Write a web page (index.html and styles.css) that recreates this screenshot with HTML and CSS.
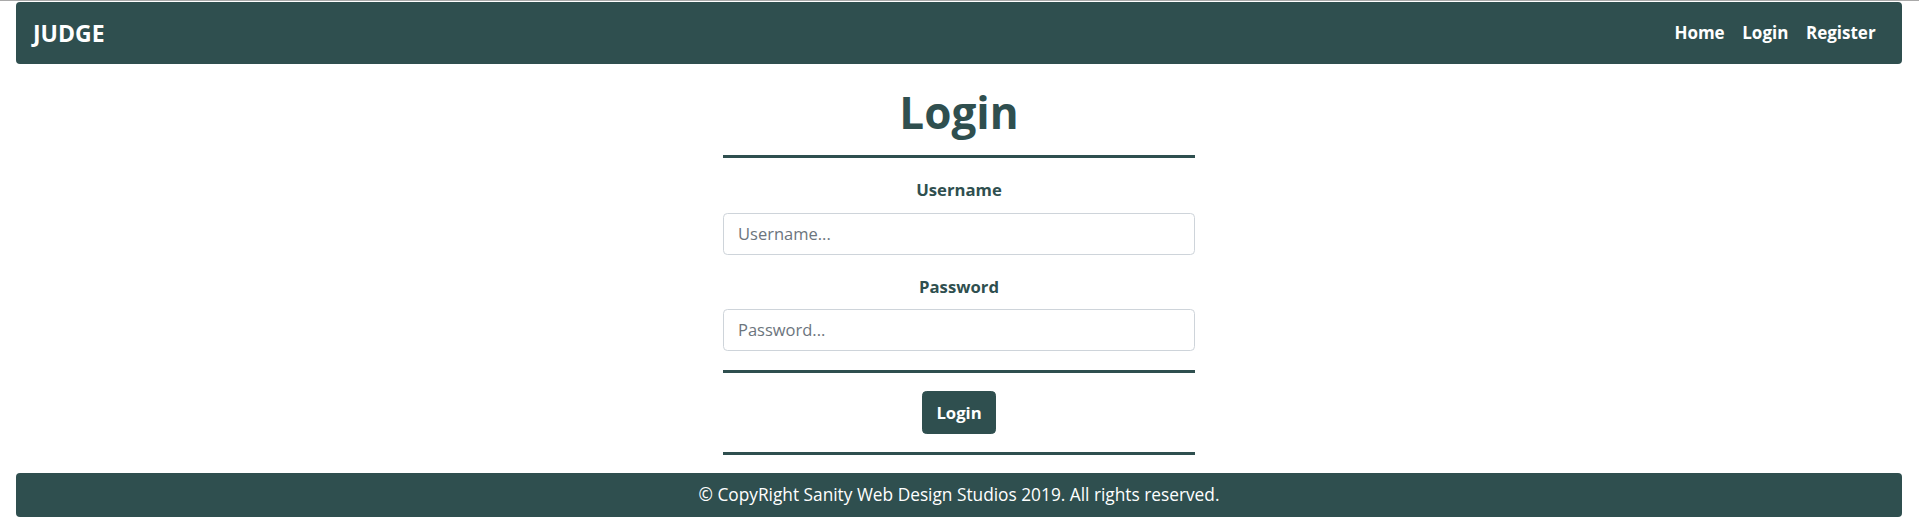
FILE: index.html
```html
<!DOCTYPE html>
<html lang="en">
<head>
<meta charset="utf-8">
<title>JUDGE - Login</title>
<link rel="stylesheet" href="styles.css">
</head>
<body>
<div class="page">
  <nav class="navbar">
    <a class="brand" href="#">JUDGE</a>
    <ul class="nav">
      <li><a href="#">Home</a></li>
      <li><a href="#">Login</a></li>
      <li><a href="#">Register</a></li>
    </ul>
  </nav>
  <main class="main">
    <form class="login">
      <h1 class="title">Login</h1>
      <hr class="rule rule-first">
      <label class="field-label" for="username">Username</label>
      <input class="field" id="username" type="text" placeholder="Username...">
      <label class="field-label" for="password">Password</label>
      <input class="field" id="password" type="password" placeholder="Password...">
      <hr class="rule rule-mid">
      <button class="btn" type="button">Login</button>
      <hr class="rule rule-last">
    </form>
  </main>
  <footer class="footer">© CopyRight Sanity Web Design Studios 2019. All rights reserved.</footer>
</div>
</body>
</html>
```

FILE: styles.css
```css
html, body {
  margin: 0;
  padding: 0;
  background: #ffffff;
}
body {
  border-top: 1px solid #a9a9a9;
  font-family: "Open Sans", "Noto Sans", sans-serif;
  font-size: 17.6px;
  line-height: 1.5;
  color: #2f4f4f;
}
.page {
  padding: 1px 17px 0 16px;
  display: flex;
  flex-direction: column;
}
.navbar {
  height: 62px;
  background: #2f4f4f;
  border-radius: 4px;
  display: flex;
  align-items: center;
  justify-content: space-between;
  padding: 0 17.6px 0 17px;
  box-sizing: border-box;
}
.brand {
  color: #ffffff;
  font-weight: 700;
  font-size: 23px;
  text-decoration: none;
}
.nav {
  list-style: none;
  margin: 0;
  padding: 0;
  display: flex;
}
.nav a {
  display: block;
  padding: 8px 8.8px;
  color: #ffffff;
  font-weight: 700;
  text-decoration: none;
  font-size: 17px;
}
.main {
  display: flex;
  justify-content: center;
}
.login {
  width: 472px;
  display: flex;
  flex-direction: column;
  align-items: stretch;
}
.title {
  margin: 22px 0 0;
  text-align: center;
  font-size: 44px;
  line-height: 52.8px;
  font-weight: 700;
  color: #2f4f4f;
}
.rule {
  margin: 0;
  border: 0;
  height: 3px;
  background: #2f4f4f;
}
.rule-first { margin-top: 16px; }
.rule-mid { margin-top: 19px; }
.rule-last { margin-top: 18px; }
.field-label {
  display: block;
  margin-top: 19px;
  text-align: center;
  font-weight: 700;
  font-size: 16.7px;
  line-height: 26px;
  color: #2f4f4f;
}
.field {
  margin-top: 10px;
  height: 42px;
  box-sizing: border-box;
  border: 1px solid #ced4da;
  border-radius: 4.4px;
  padding: 0 14px;
  font-family: inherit;
  font-size: 16.5px;
  color: #495057;
  background: #ffffff;
}
.field::placeholder {
  color: #6c757d;
}
#password { margin-top: 9px; }
.btn {
  align-self: center;
  margin-top: 18px;
  height: 43px;
  padding: 0 13px;
  background: #2f4f4f;
  color: #ffffff;
  border: 1px solid #2f4f4f;
  border-radius: 4.4px;
  font-family: inherit;
  font-weight: 700;
  font-size: 16.7px;
}
.footer {
  margin-top: 18px;
  height: 44px;
  background: #2f4f4f;
  border-radius: 4px;
  color: #ffffff;
  display: flex;
  align-items: center;
  justify-content: center;
  font-size: 17.3px;
}
```
